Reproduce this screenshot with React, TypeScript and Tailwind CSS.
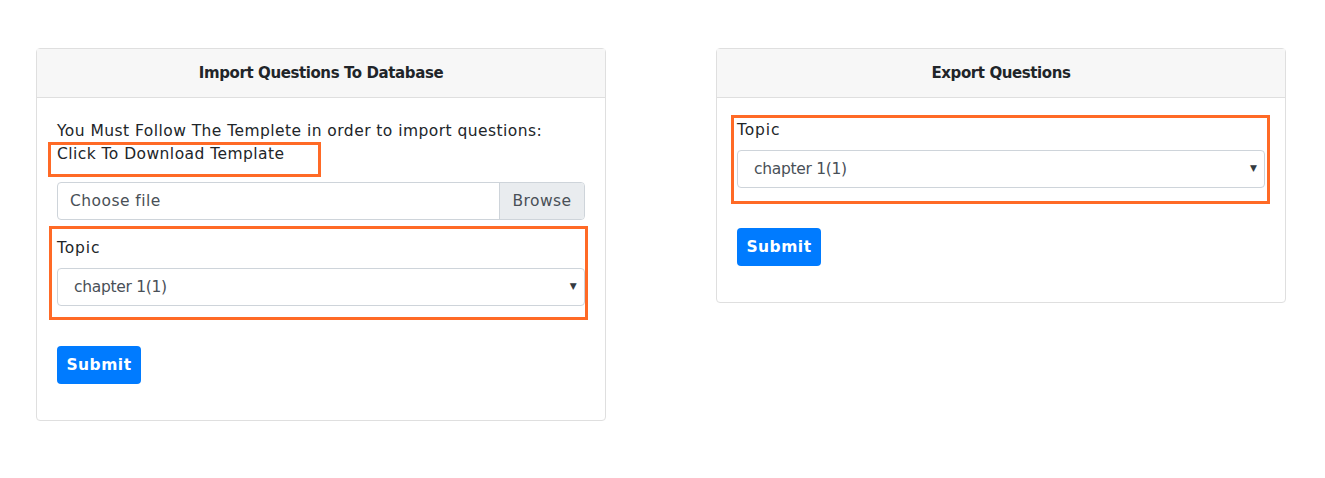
import React from "react";

const font = { fontFamily: '"DejaVu Sans", "Noto Sans", sans-serif' };

function Select() {
  return (
    <div className="relative flex h-[38px] w-full items-center rounded-[4px] border border-[#ced4da] bg-white pl-[16px] pt-[2px]">
      <span className="text-[15.5px] tracking-[-0.3px] text-[#495057]">chapter 1(1)</span>
      <span className="absolute right-[7px] top-1/2 -translate-y-1/2 text-[9px] text-[#343a40]">▼</span>
    </div>
  );
}

function Submit() {
  return (
    <button className="h-[38px] w-[84px] rounded-[4px] bg-[#007bff] pt-[1px] text-[15.5px] font-bold tracking-[0.5px] text-white">Submit</button>
  );
}

export default function App() {
  return (
    <div className="min-h-[478px] w-full bg-white text-[#212529]" style={font}>
      <div className="flex items-start gap-[110px] pl-[36px] pt-[48px]">
        <div className="relative w-[570px] rounded-[4px] border border-[#dfdfdf]">
          <div className="flex h-[49px] items-center justify-center border-b border-[#dfdfdf] bg-[#f7f7f7] text-[15px] font-bold tracking-[-0.4px]">
            Import Questions To Database
          </div>
          <div className="px-[20px] pb-[36px] pt-[22px] text-[15.5px] tracking-[0.45px]">
            <p className="leading-[23px]">You Must Follow The Templete in order to import questions:</p>
            <p className="leading-[23px]">Click To Download Template</p>
            <div className="mt-[16px] flex h-[38px] overflow-hidden rounded-[4px] border border-[#ced4da]">
              <div className="flex flex-1 items-center pl-[12px] pt-[1px] text-[#495057]">Choose file</div>
              <div className="flex w-[85px] items-center justify-center border-l border-[#ced4da] bg-[#e9ecef] pt-[1px] text-[#495057]">Browse</div>
            </div>
            <div className="mt-[17px] leading-[22px] tracking-[0.9px]">Topic</div>
            <div className="mt-[9px]"><Select /></div>
            <div className="mt-[40px]"><Submit /></div>
          </div>
          <div className="pointer-events-none absolute left-[11px] top-[93px] h-[35px] w-[273px] border-[3px] border-[#ff6a26]" />
          <div className="pointer-events-none absolute left-[12px] top-[177px] h-[94px] w-[539px] border-[3px] border-[#ff6a26]" />
        </div>

        <div className="relative w-[570px] rounded-[4px] border border-[#dfdfdf]">
          <div className="flex h-[49px] items-center justify-center border-b border-[#dfdfdf] bg-[#f7f7f7] text-[15px] font-bold tracking-[-0.4px]">
            Export Questions
          </div>
          <div className="px-[20px] pb-[36px] pt-[21px] text-[15.5px]">
            <div className="leading-[22px] tracking-[0.9px]">Topic</div>
            <div className="mt-[9px]"><Select /></div>
            <div className="mt-[40px]"><Submit /></div>
          </div>
          <div className="pointer-events-none absolute left-[14px] top-[66px] h-[89px] w-[539px] border-[3px] border-[#ff6a26]" />
        </div>
      </div>
    </div>
  );
}
